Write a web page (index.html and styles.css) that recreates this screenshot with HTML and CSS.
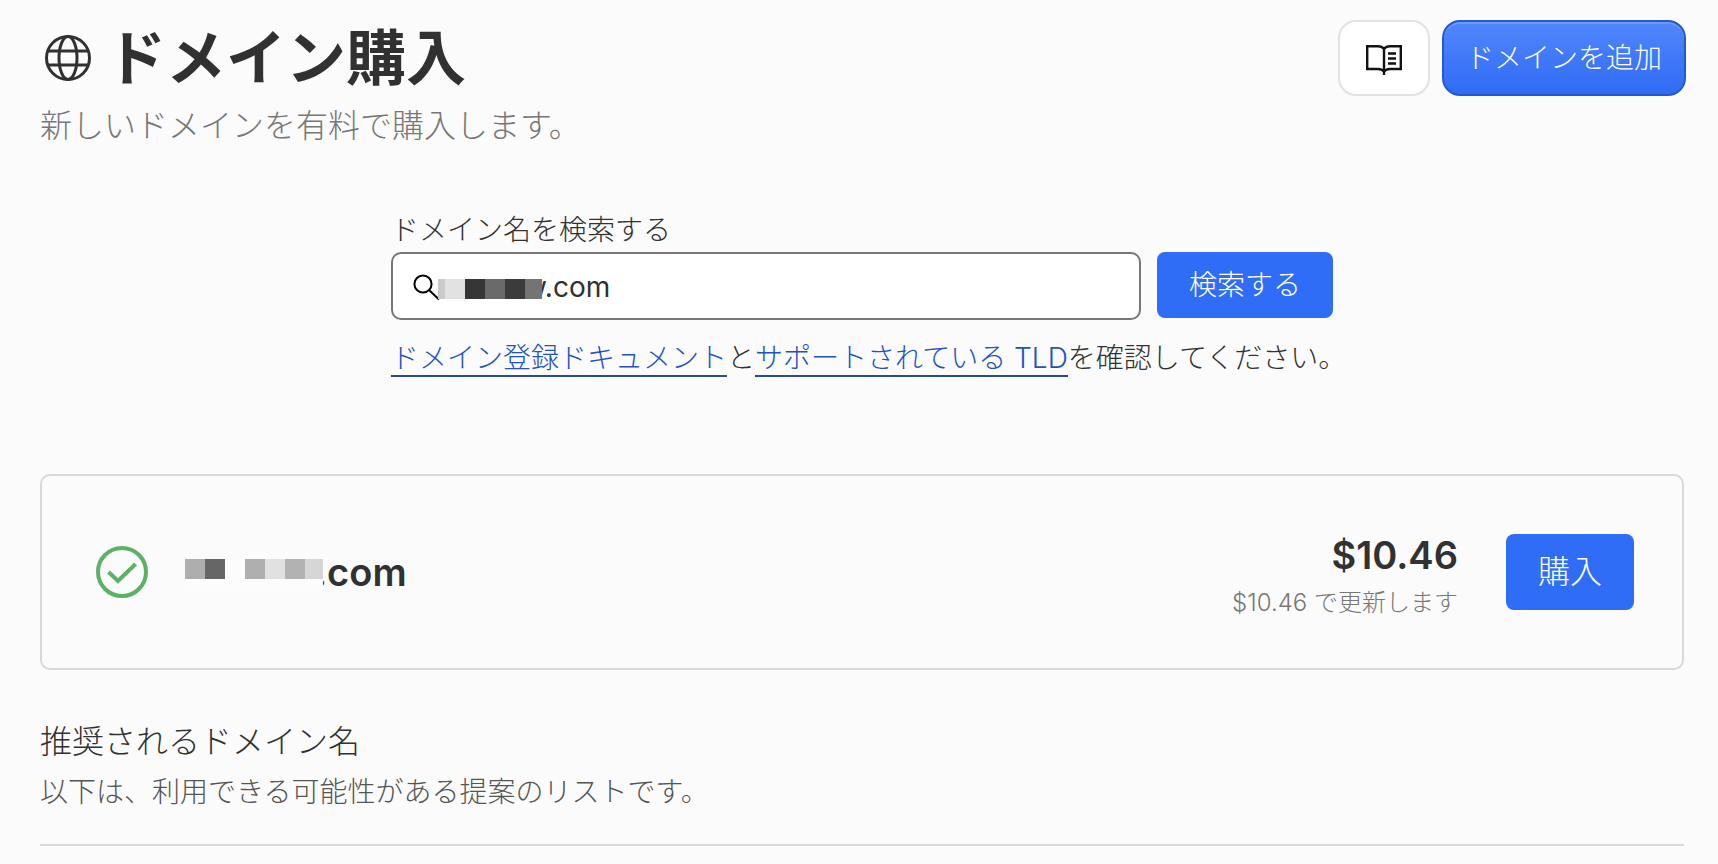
FILE: index.html
```html
<!DOCTYPE html>
<html lang="ja">
<head>
    <meta charset="UTF-8">
    <meta name="viewport" content="width=device-width, initial-scale=1.0">
    <title>ドメイン購入</title>
    <link rel="stylesheet" href="styles.css">
</head>
<body>
    <header class="page-header">
        <div>
            <h1 class="page-title">
                <svg class="globe-icon" viewBox="0 0 48 48" fill="none" stroke="currentColor" stroke-width="3" aria-hidden="true">
                    <circle cx="24" cy="24" r="21.5"/>
                    <ellipse cx="24" cy="24" rx="9" ry="21.5"/>
                    <path d="M4 17h40M4 31h40"/>
                </svg>
                ドメイン購入
            </h1>
            <p class="page-subtitle">新しいドメインを有料で購入します。</p>
        </div>
        <div class="header-actions">
            <button type="button" class="docs-btn" aria-label="ドキュメント">
                <svg class="book-icon" viewBox="0 0 36 32" fill="none" stroke="currentColor" stroke-width="2.4" aria-hidden="true">
                    <path d="M18 5C16.500 3 14.500 2.200 12 2.200H1.200V25H12c2.500 0 4.500.7 6 2.500 1.500-1.800 3.500-2.500 6-2.500h10.800V2.200H24C21.500 2.200 19.500 3 18 5zM18 5v26"/>
                    <path d="M22 9.500h8M22 14.500h8M22 19.500h8"/>
                </svg>
            </button>
            <button type="button" class="add-btn">ドメインを追加</button>
        </div>
    </header>

    <main>
        <form class="search">
            <label class="search-label" for="domain">ドメイン名を検索する</label>
            <div class="search-row">
                <div class="search-box">
                    <svg class="search-icon" viewBox="0 0 27 27" fill="none" stroke="currentColor" stroke-width="2" aria-hidden="true">
                        <circle cx="10" cy="10" r="8.600"/>
                        <path d="M16 16l10 9.500"/>
                    </svg>
                    <svg class="search-mask" viewBox="0 0 104 20" aria-hidden="true">
                        <rect width="7" height="20" fill="#cbcbcb"/>
                        <rect x="7" width="20" height="20" fill="#e2e2e2"/>
                        <rect x="27" width="20" height="20" fill="#363636"/>
                        <rect x="47" width="20" height="20" fill="#6a6a6a"/>
                        <rect x="67" width="20" height="20" fill="#3b3b3b"/>
                        <rect x="87" width="17" height="20" fill="#747474"/>
                    </svg>
                    <input type="text" id="domain" class="search-input" value="w.com">
                </div>
                <button type="button" class="search-btn">検索する</button>
            </div>
            <p class="search-help"><a href="#docs">ドメイン登録ドキュメント</a>と<a href="#tld">サポートされている TLD</a>を確認してください。</p>
        </form>

        <section class="result">
            <svg class="check-icon" viewBox="0 0 52 52" fill="none" stroke="currentColor" stroke-width="4" aria-hidden="true">
                <circle cx="26" cy="26" r="24"/>
                <path d="M12.500 26L22 35 39.500 18"/>
            </svg>
            <div class="result-name">
                <svg class="name-mask" viewBox="0 0 138 34" aria-hidden="true">
                    <rect width="138" height="34" fill="#fcfcfc"/>
                    <rect width="20" height="20" fill="#aeaeae"/>
                    <rect x="20" width="20" height="20" fill="#666"/>
                    <rect x="60" width="20" height="20" fill="#afafaf"/>
                    <rect x="80" width="20" height="20" fill="#e1e1e1"/>
                    <rect x="100" width="20" height="20" fill="#b2b2b2"/>
                    <rect x="120" width="18" height="20" fill="#d6d6d6"/>
                </svg>
                <span>.com</span>
            </div>
            <div class="result-price">
                <div class="price">$10.46</div>
                <div class="renewal">$10.46 で更新します</div>
            </div>
            <button type="button" class="buy-btn">購入</button>
        </section>

        <section class="suggestions">
            <h2 class="suggestions-title">推奨されるドメイン名</h2>
            <p class="suggestions-text">以下は、利用できる可能性がある提案のリストです。</p>
        </section>
    </main>
</body>
</html>
```
FILE: styles.css
```css
* {
    box-sizing: border-box;
}
body {
    font-family: Inter, "Noto Sans CJK JP", sans-serif;
    font-size: 28px;
    line-height: 40px;
    margin: 0;
    padding: 20px 34px 0 40px;
    color: #313131;
    background-color: #fbfbfb;
}
h1, h2, p {
    margin: 0;
}
svg {
    display: block;
    flex: none;
}
button {
    font-family: inherit;
    font-size: 28px;
    font-weight: 300;
    line-height: 40px;
    border: none;
    color: white;
    background-color: #2f6df6;
    white-space: nowrap;
    cursor: pointer;
}

/* header */
.page-header {
    display: flex;
    justify-content: space-between;
    align-items: flex-start;
    margin-right: -2px;
}
.page-title {
    display: flex;
    align-items: center;
    gap: 14px;
    padding-left: 4px;
    font-size: 60px;
    font-weight: 700;
    line-height: 76px;
}
.globe-icon {
    width: 48px;
    height: 48px;
}
.page-subtitle {
    margin-top: 10px;
    font-size: 32px;
    font-weight: 300;
    color: #777;
}
.header-actions {
    display: flex;
    gap: 12px;
}
.docs-btn {
    display: flex;
    align-items: center;
    justify-content: center;
    width: 92px;
    height: 76px;
    padding-top: 4px;
    border: 2px solid #e2e2e2;
    border-radius: 18px;
    color: #111;
    background-color: white;
}
.book-icon {
    width: 36px;
    height: 32px;
}
.add-btn {
    height: 76px;
    padding: 0 22px;
    border: 2px solid #2459d3;
    border-radius: 18px;
    background: linear-gradient(#5186fb, #2f6bf5);
    box-shadow: inset 0 2px 0 #6a98fc;
}

/* search form */
.search {
    max-width: 942px;
    margin: 64px auto 96px;
}
.search-label {
    display: block;
    margin-bottom: 2px;
    font-weight: 300;
}
.search-row {
    display: flex;
    align-items: flex-start;
    gap: 16px;
}
.search-box {
    display: flex;
    align-items: center;
    flex: 1;
    height: 68px;
    padding: 2px 20px 0;
    border: 2px solid #777;
    border-radius: 10px;
    background-color: white;
}
.search-icon {
    width: 27px;
    height: 27px;
    color: black;
}
.search-mask {
    position: relative;
    width: 104px;
    height: 20px;
    margin: 4px 0 0 -2px;
}
.search-input {
    flex: 1;
    min-width: 0;
    margin-left: -18px;
    padding: 0;
    border: none;
    outline: none;
    font-family: inherit;
    font-size: 28px;
    line-height: 40px;
    color: #313131;
    background-color: transparent;
}
.search-btn {
    height: 66px;
    padding: 0 32px;
    border-radius: 8px;
}
.search-help {
    margin-top: 18px;
    font-weight: 300;
    white-space: nowrap;
}
.search-help a {
    color: #2152c0;
    text-decoration: none;
    border-bottom: 2px solid #254c94;
}

/* search result */
.result {
    display: flex;
    align-items: center;
    height: 196px;
    padding: 0 48px 0 54px;
    border: 2px solid #d9d9d9;
    border-radius: 10px;
}
.check-icon {
    width: 52px;
    height: 52px;
    color: #5db068;
}
.result-name {
    display: flex;
    align-items: center;
    flex: 1;
    margin-left: 37px;
    font-size: 38px;
    font-weight: 600;
}
.name-mask {
    position: relative;
    width: 138px;
    height: 34px;
    margin: 8px -8px 0 0;
}
.result-price {
    margin-right: 48px;
    padding-top: 10px;
    text-align: right;
}
.price {
    font-size: 38px;
    font-weight: 600;
    line-height: 48px;
}
.renewal {
    margin-top: 4px;
    font-size: 24px;
    font-weight: 300;
    color: #777;
}
.buy-btn {
    height: 76px;
    padding: 0 32px;
    border-radius: 8px;
    font-size: 32px;
}

/* suggestions */
.suggestions {
    margin-top: 52px;
    padding-bottom: 32px;
    border-bottom: 2px solid #d9d9d9;
}
.suggestions-title {
    font-size: 32px;
    font-weight: 300;
}
.suggestions-text {
    margin-top: 10px;
    font-weight: 300;
    color: #555;
}
```
